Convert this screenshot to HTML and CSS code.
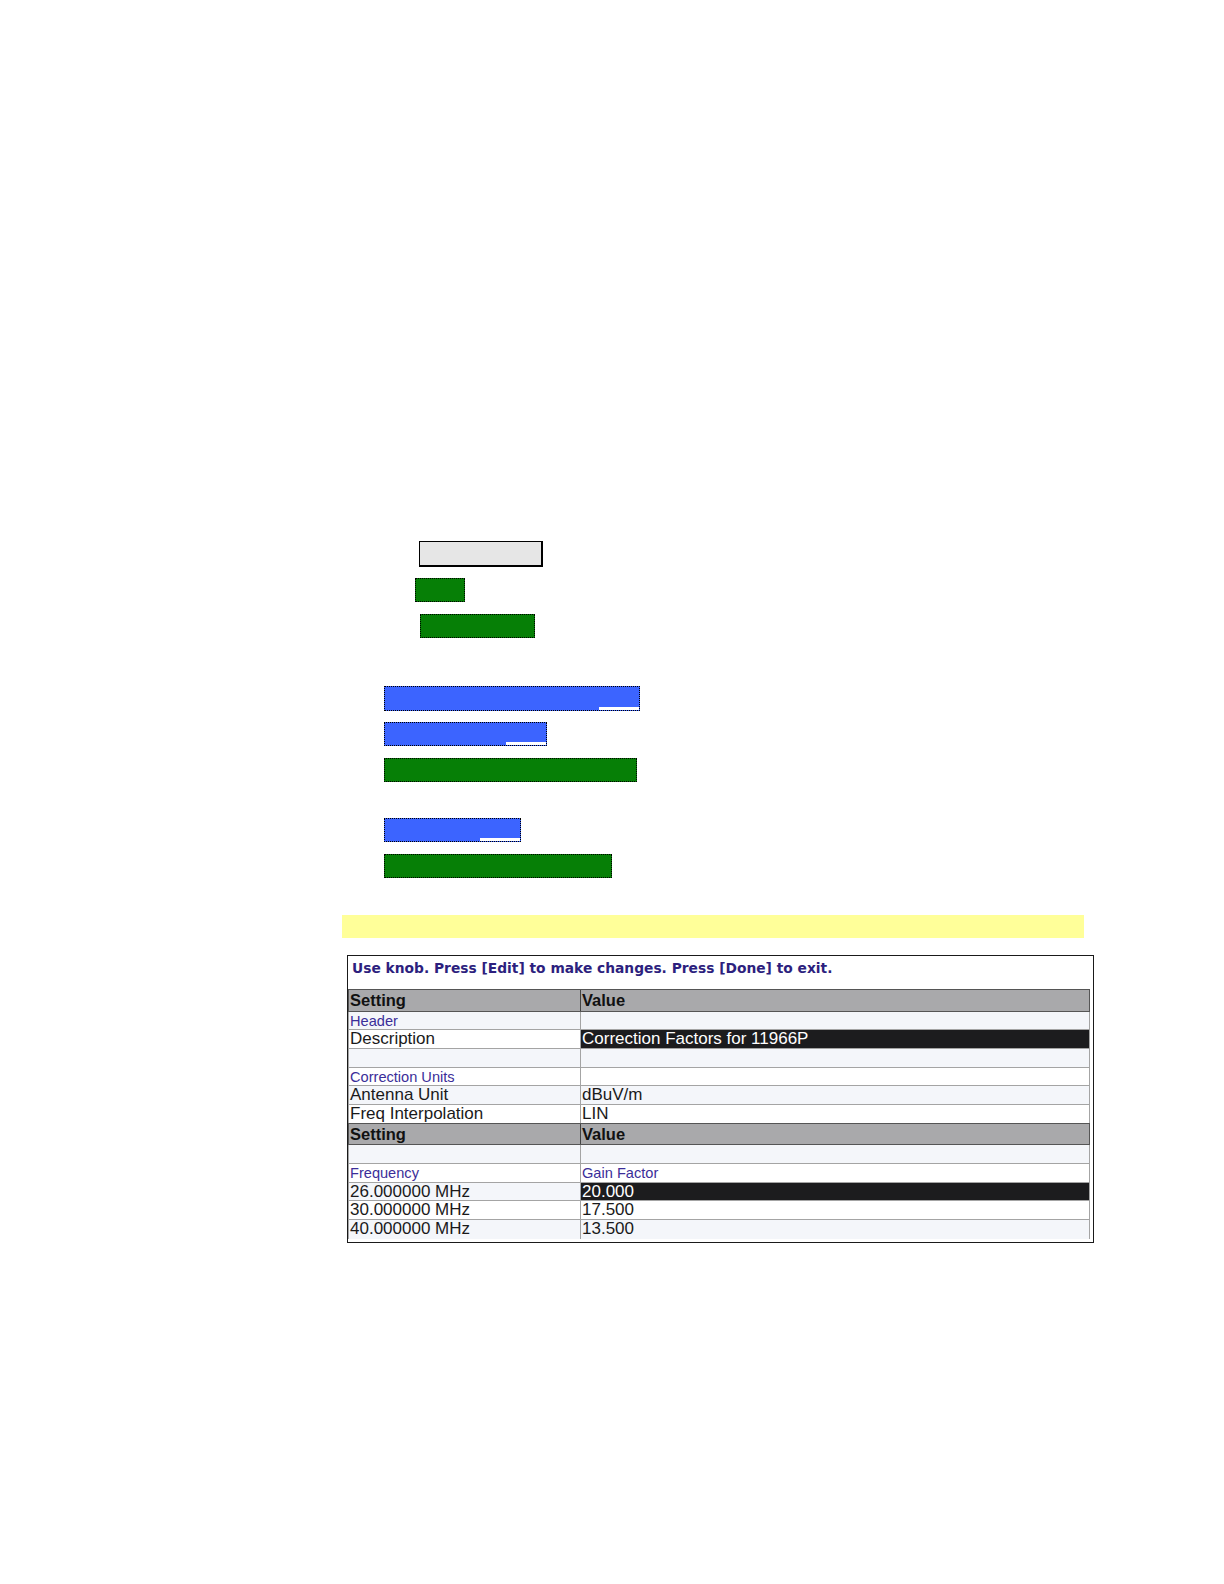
FILE: index.html
```html
<!DOCTYPE html>
<html>
<head>
<meta charset="utf-8">
<link rel="stylesheet" href="styles.css">
</head>
<body>
<div class="page">
  <div class="bars">
    <div class="bar gray-box"></div>
    <div class="bar green g1"></div>
    <div class="bar green g2"></div>
    <div class="bar blue b1"><span class="notch n1"></span></div>
    <div class="bar blue b2"><span class="notch n2"></span></div>
    <div class="bar green g3"></div>
    <div class="bar blue b3"><span class="notch n3"></span></div>
    <div class="bar green g4"></div>
  </div>
  <div class="yellow"></div>
  <div class="panel">
    <div class="msg">Use knob. Press [Edit] to make changes. Press [Done] to exit.</div>
    <div class="grid">
      <div class="row head"><div class="c1">Setting</div><div class="c2">Value</div></div>
      <div class="row light"><div class="c1 label">Header</div><div class="c2"></div></div>
      <div class="row white"><div class="c1">Description</div><div class="c2 sel">Correction Factors for 11966P</div></div>
      <div class="row light"><div class="c1"></div><div class="c2"></div></div>
      <div class="row white"><div class="c1 label">Correction Units</div><div class="c2"></div></div>
      <div class="row light"><div class="c1">Antenna Unit</div><div class="c2">dBuV/m</div></div>
      <div class="row white"><div class="c1">Freq Interpolation</div><div class="c2">LIN</div></div>
      <div class="row head"><div class="c1">Setting</div><div class="c2">Value</div></div>
      <div class="row light"><div class="c1"></div><div class="c2"></div></div>
      <div class="row white"><div class="c1 label">Frequency</div><div class="c2 label">Gain Factor</div></div>
      <div class="row light"><div class="c1">26.000000 MHz</div><div class="c2 sel">20.000</div></div>
      <div class="row white"><div class="c1">30.000000 MHz</div><div class="c2">17.500</div></div>
      <div class="row light last"><div class="c1">40.000000 MHz</div><div class="c2">13.500</div></div>
    </div>
  </div>
</div>
</body>
</html>
```

FILE: styles.css
```css
* { box-sizing: border-box; }
html, body { margin: 0; padding: 0; background: #fff; }
body { font-family: "Liberation Sans", Arial, sans-serif; }

.page { padding-top: 541px; width: 1224px; height: 1584px; overflow: hidden; }

.bars { display: flex; flex-direction: column; align-items: flex-start; }
.bar { position: relative; }

.gray-box {
  margin-left: 419px; width: 124px; height: 26px;
  background: #e6e6e6;
  border: 1px solid #000; border-right-width: 2px; border-bottom-width: 2px;
}
.green { background: #067f06; border: 1px dotted #000; }
.blue { background: #3c64ff; border: 1px dotted #000; }

.g1 { margin-top: 11px; margin-left: 415px; width: 50px; height: 24px; }
.g2 { margin-top: 12px; margin-left: 420px; width: 115px; height: 24px; }
.b1 { margin-top: 48px; margin-left: 384px; width: 256px; height: 25px; }
.b2 { margin-top: 11px; margin-left: 384px; width: 163px; height: 24px; }
.g3 { margin-top: 12px; margin-left: 384px; width: 253px; height: 24px; }
.b3 { margin-top: 36px; margin-left: 384px; width: 137px; height: 24px; }
.g4 { margin-top: 12px; margin-left: 384px; width: 228px; height: 24px; }

.notch { position: absolute; bottom: 0; right: 0; height: 3px; background: #fff; }
.n1, .n2, .n3 { width: 40px; }

.yellow {
  margin-top: 37px; margin-left: 342px; width: 742px; height: 23px;
  background: #ffff99;
}

.panel {
  margin-top: 17px; margin-left: 347px; width: 747px; height: 288px;
  border: 1px solid #1a1a1a;
  padding-right: 3px;
  background: #fff;
}
.msg {
  height: 33px;
  padding: 4px 0 0 4px;
  font-family: "DejaVu Sans", Verdana, sans-serif;
  font-size: 13.8px; font-weight: bold; color: #2d1f7e;
  line-height: 16px;
  white-space: nowrap;
}
.grid { display: flex; flex-direction: column; }
.row { display: flex; height: 18.7px; border-bottom: 1px solid #a4a4a4; border-left: 1px solid #a4a4a4; }
.row.last { border-bottom: none; }
.row .c1 { width: 232px; flex: none; border-right: 1px solid #a4a4a4; }
.row .c2 { flex: 1; border-right: 1px solid #a4a4a4; }
.c1, .c2 {
  font-size: 17px; color: #1a1a1a; line-height: 18px;
  padding-left: 1px; white-space: nowrap; overflow: hidden;
}
.row.light { background: #f4f6fa; }
.row.white { background: #fff; }
.row.head {
  height: 22.5px; background: #a9a9ab;
  border-top: 1px solid #555; border-bottom: 1px solid #555;
  border-left: 1px solid #555;
}
.row.head .c1 { border-right: 1px solid #444; width: 232px; }
.row.head .c2 { border-right: 1px solid #555; }
.row.head .c1, .row.head .c2 {
  font-weight: bold; font-size: 16.5px; color: #111; line-height: 20px;
}
.row + .row.head { margin-top: -1px; }
.label { font-size: 14.6px !important; color: #3b2e99 !important; line-height: 19px !important; }
.sel { background: #1c1c1e; color: #fff !important; }
```
